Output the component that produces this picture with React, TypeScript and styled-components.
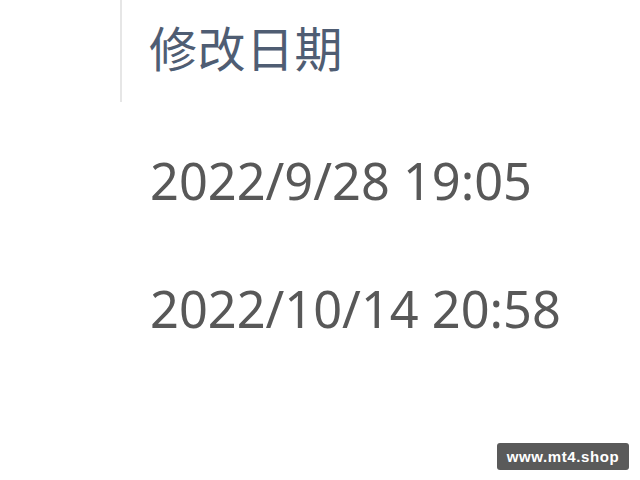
import React from "react";
import styled, { createGlobalStyle } from "styled-components";

const Global = createGlobalStyle`
  html, body { margin: 0; padding: 0; background: #ffffff; }
  body { width: 640px; height: 480px; overflow: hidden; position: relative; }
`;

const Page = styled.div`
  width: 640px;
  height: 480px;
  position: relative;
  background: #ffffff;
  padding-left: 120px;
  box-sizing: border-box;
`;

const Column = styled.div`
  display: flex;
  flex-direction: column;
`;

const Header = styled.div`
  height: 102px;
  border-left: 2px solid #e6e6e6;
  padding-left: 27px;
  display: flex;
  align-items: center;
  padding-bottom: 10px;
  box-sizing: border-box;
`;

const HeaderText = styled.span`
  font-family: "Noto Sans CJK SC", "Noto Sans", sans-serif;
  font-size: 48px;
  line-height: 1;
  color: #4f5d73;
  letter-spacing: 0.5px;
`;

const Rows = styled.div`
  display: flex;
  flex-direction: column;
  padding-top: 15px;
`;

const Row = styled.div`
  height: 128px;
  display: flex;
  align-items: center;
  padding-left: 30px;
`;

const DateText = styled.span`
  font-family: "Noto Sans", "Open Sans", sans-serif;
  font-size: 50.5px;
  line-height: 1;
  color: #585858;
`;

const Watermark = styled.div`
  position: absolute;
  left: 497px;
  top: 443px;
  width: 132px;
  height: 27px;
  border-radius: 3px;
  background: #5a5a5a;
  color: #ffffff;
  font-family: "Liberation Sans", Arial, sans-serif;
  font-weight: bold;
  font-size: 15px;
  letter-spacing: 0.6px;
  display: flex;
  align-items: center;
  justify-content: center;
`;

const dates = ["2022/9/28 19:05", "2022/10/14 20:58"];

export default function App() {
  return (
    <Page>
      <Global />
      <Column>
        <Header>
          <HeaderText>修改日期</HeaderText>
        </Header>
        <Rows>
          {dates.map((d) => (
            <Row key={d}>
              <DateText>{d}</DateText>
            </Row>
          ))}
        </Rows>
      </Column>
      <Watermark>www.mt4.shop</Watermark>
    </Page>
  );
}
